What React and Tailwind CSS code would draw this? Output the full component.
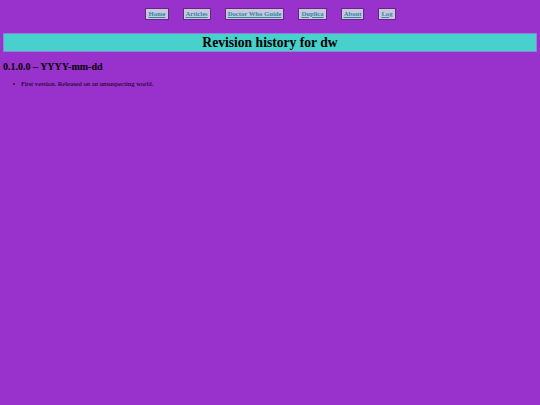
import React from 'react';

const links = ["Home", "Articles", "Doctor Who Guide", "Duplica", "About", "Log"];

const App = () => {
    return (
        <div className="min-h-screen bg-[#9932cc] px-[3px] font-['Liberation_Serif',serif] text-[6.67px] text-black">
            <nav className="flex justify-center gap-[14px] pt-[8px] pl-[1px]">
                {links.map((label) => (
                    <a
                        key={label}
                        href="#"
                        className="flex h-[12px] items-center border border-[#5e2b7e] bg-[#cdc4de] px-[2px] font-bold leading-none text-[#2a8aa6] underline"
                    >
                        {label}
                    </a>
                ))}
            </nav>
            <h1 className="mt-[13px] flex h-[19px] items-center justify-center border border-[#8f80d8] bg-[#48d1cc] text-[13.6px] font-bold leading-none">
                Revision history for dw
            </h1>
            <h2 className="mt-[9px] text-[10px] font-bold leading-[12px]">0.1.0.0 – YYYY-mm-dd</h2>
            <ul className="mt-[6px] pl-[10px] leading-[9px]">
                <li className="flex items-center gap-[6px]">
                    <span className="h-[2px] w-[2px] rounded-full bg-[#222]" />
                    <span>First version. Released on an unsuspecting world.</span>
                </li>
            </ul>
        </div>
    );
};

export default App;
